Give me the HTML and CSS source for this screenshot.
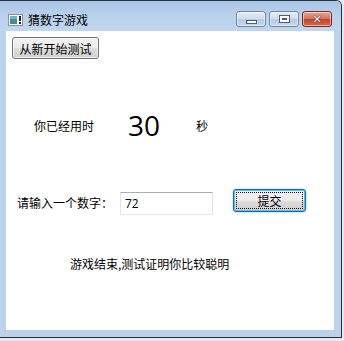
FILE: index.html
```html
<!DOCTYPE html>
<html lang="zh-CN">
<head>
  <meta charset="UTF-8">
  <title>猜数字游戏</title>
  <link rel="stylesheet" href="styles.css">
</head>
<body>
  <div class="window">
    <div class="titlebar">
      <svg class="app-icon" width="15" height="12" viewBox="0 0 15 12">
        <rect x="0.5" y="0.5" width="14" height="11" fill="#fff" stroke="#8a8f96"/>
        <rect x="2" y="2" width="7" height="8" fill="#3f8f8a"/>
        <rect x="2" y="2" width="7" height="3" fill="#6fb3c9"/>
        <rect x="11" y="2" width="2" height="5" fill="#222"/>
        <rect x="11" y="8" width="2" height="2" fill="#222"/>
      </svg>
      <span class="title">猜数字游戏</span>
      <div class="caption-btns">
        <div class="cap-btn">
          <span class="min-glyph"></span>
        </div>
        <div class="cap-btn">
          <span class="max-glyph"></span>
        </div>
        <div class="cap-btn close">
          <span class="close-glyph">✕</span>
        </div>
      </div>
    </div>

    <div class="client">
      <button class="btn restart">从新开始测试</button>

      <div class="time-row">
        <span class="time-label">你已经用时</span>
        <span class="time-value">30</span>
        <span class="time-unit">秒</span>
      </div>

      <div class="input-row">
        <span class="input-label">请输入一个数字：</span>
        <input class="num-input" type="text" value="72">
        <button class="btn submit">提交</button>
      </div>

      <div class="result">游戏结束,测试证明你比较聪明</div>
    </div>
  </div>
</body>
</html>
```

FILE: styles.css
```css
* {
  margin: 0;
  padding: 0;
  box-sizing: border-box;
}

body {
  background: #e6e8eb;
  font-family: "Noto Sans CJK SC", "Noto Sans", sans-serif;
  font-size: 12px;
  color: #000;
}

/* Win7 window frame */
.window {
  width: 342px;
  height: 338px;
  display: flex;
  flex-direction: column;
  background: #bcd2ea;
  border: 1px solid #24313f;
  border-left: 0;
  border-radius: 0 6px 0 0;
}

.titlebar {
  height: 30px;
  display: flex;
  align-items: center;
  padding-left: 8px;
  background: linear-gradient(to bottom, #a9c5e6, #bcd3ec 60%, #c0d6ee);
  border-radius: 0 5px 0 0;
}

.app-icon {
  margin-top: 7px;
}

.title {
  margin-left: 5px;
  margin-top: 7px;
  font-size: 12px;
  color: #000;
}

.caption-btns {
  margin-left: auto;
  margin-right: 9px;
  align-self: flex-start;
  margin-top: 10px;
  display: flex;
  gap: 3px;
}

.cap-btn {
  width: 30px;
  height: 16px;
  border: 1px solid #6f86a6;
  border-radius: 3px;
  background: linear-gradient(to bottom, #e3ecf7, #cfdcec 50%, #b7c9e0 51%, #c7d8ec);
  display: flex;
  align-items: center;
  justify-content: center;
  box-shadow: inset 0 0 0 1px rgba(255, 255, 255, 0.5);
}

.cap-btn.close {
  border-color: #7a2c24;
  background: linear-gradient(to bottom, #e8a493, #d3715c 50%, #c2412b 51%, #d06a4e);
}

.min-glyph {
  width: 11px;
  height: 4px;
  margin-top: 5px;
  background: #fff;
  border: 1px solid #4b5f7c;
}

.max-glyph {
  width: 11px;
  height: 8px;
  border: 1px solid #4b5f7c;
  background: #fff;
  box-shadow: inset 0 0 0 2px #fff, inset 0 0 0 3px #4b5f7c;
}

.close-glyph {
  color: #fff;
  font-family: "DejaVu Sans", sans-serif;
  font-weight: bold;
  font-size: 11px;
  line-height: 1;
  text-shadow: 0 0 1px #5a1a12, 0 0 1px #5a1a12;
}

.client {
  flex: 1;
  margin: 0 7px 7px 6px;
  background: #fff;
}

/* buttons */
.btn {
  font-family: "Noto Sans CJK SC", "Noto Sans", sans-serif;
  font-size: 12px;
  color: #000;
  border: 1px solid #707070;
  border-radius: 3px;
  background: linear-gradient(to bottom, #f2f2f2, #ebebeb 50%, #dddddd 51%, #cfcfcf);
  box-shadow: inset 0 0 0 1px rgba(255, 255, 255, 0.7);
}

.restart {
  display: block;
  width: 87px;
  height: 22px;
  margin: 6px 0 0 6px;
}

.time-row {
  display: flex;
  align-items: center;
  height: 36px;
  margin-top: 48px;
}

.time-label {
  margin-left: 28px;
  width: 94px;
}

.time-value {
  width: 68px;
  font-family: "Open Sans", "Noto Sans", sans-serif;
  font-size: 28px;
  line-height: 36px;
}

.input-row {
  display: flex;
  align-items: flex-start;
  margin-top: 46px;
  height: 26px;
}

.input-label {
  margin-left: 11px;
  width: 103px;
  margin-top: 5px;
}

.num-input {
  width: 93px;
  height: 23px;
  margin-top: 3px;
  padding-left: 4px;
  border: 1px solid;
  border-color: #abadb3 #dbdfe6 #e3e9ef #e2e3ea;
  font-family: "Open Sans", "Noto Sans", sans-serif;
  font-size: 12px;
  color: #000;
  outline: none;
}

.submit {
  margin-left: 20px;
  width: 73px;
  height: 23px;
  border-color: #2c628b;
  box-shadow: inset 0 0 0 1px #48c8ef, 0 0 2px #48c8ef;
  outline: 1px dotted #000;
  outline-offset: -4px;
}

.result {
  margin-top: 40px;
  margin-left: 64px;
  line-height: 18px;
}
```
